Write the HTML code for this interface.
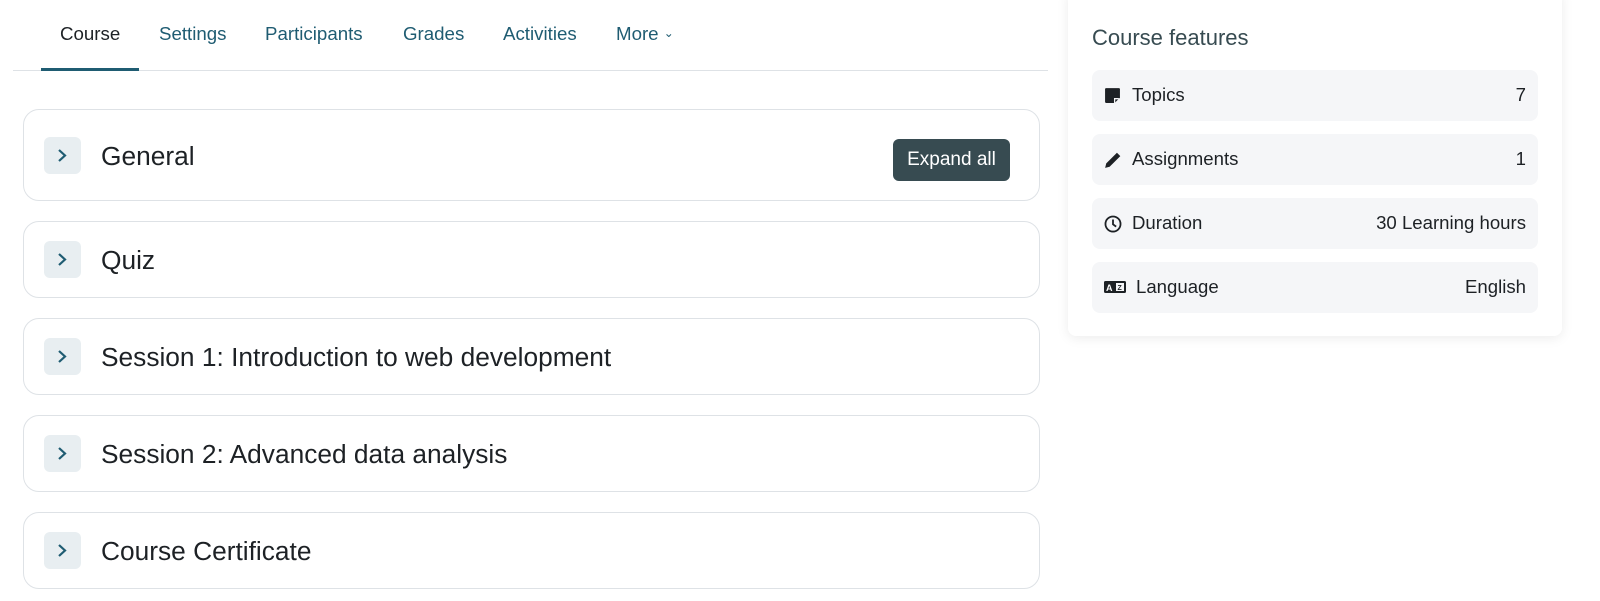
<!DOCTYPE html>
<html><head><meta charset="utf-8"><style>
*{box-sizing:border-box;margin:0;padding:0}
body{width:1600px;height:601px;background:#fff;font-family:"Liberation Sans",sans-serif;color:#1d2125;position:relative;overflow:hidden}
.tab{position:absolute;top:23px;font-size:18.7px;color:#1f5c72}
.nav-line{position:absolute;left:13px;top:70px;width:1035px;height:1px;background:#dee2e6}
.nav-active{position:absolute;left:41px;top:68px;width:98px;height:3px;background:#1f5c72}
.sec{position:absolute;left:23px;width:1017px;border:1px solid #dee2e6;border-radius:16px;background:#fff}
.tg{position:absolute;left:20px;width:37px;height:37px;border-radius:6px;background:#e8eef1}
.tg svg{position:absolute;left:12px;top:11px}
.st{position:absolute;left:77px;font-size:26.3px;color:#1d2125}
.btn{position:absolute;left:893px;top:139px;width:117px;height:42px;background:#374b51;color:#fff;border-radius:6px;font-size:19px;text-align:center;line-height:42px}
.card{position:absolute;left:1068px;top:-10px;width:494px;height:346px;background:#fff;border-radius:8px;box-shadow:0 2px 12px rgba(0,0,0,.08)}
.ct{position:absolute;left:1092px;top:25px;font-size:22px;color:#374b51}
.row{position:absolute;left:1092px;width:446px;height:51px;background:#f5f6f8;border-radius:8px;font-size:18.6px}
.row .l{position:absolute;left:40px;top:14px}
.row .r{position:absolute;right:12px;top:14px}
.row svg{position:absolute;left:12px;top:17px}
</style></head><body>
<div class="tab" style="left:60px;color:#1d2125">Course</div>
<div class="tab" style="left:159px">Settings</div>
<div class="tab" style="left:265px">Participants</div>
<div class="tab" style="left:403px">Grades</div>
<div class="tab" style="left:503px">Activities</div>
<div class="tab" style="left:616px">More <span style="font-size:12px;position:relative;top:-3px">&#8964;</span></div>
<div class="nav-line"></div><div class="nav-active"></div>

<div class="sec" style="top:109px;height:92px"><div class="tg" style="top:27px"><svg width="12" height="15" viewBox="0 0 12 15"><path d="M3 2l6 5.5L3 13" fill="none" stroke="#1f5c72" stroke-width="2.2"/></svg></div><div class="st" style="top:31px">General</div></div>
<div class="btn">Expand all</div>
<div class="sec" style="top:221px;height:77px"><div class="tg" style="top:19px"><svg width="12" height="15" viewBox="0 0 12 15"><path d="M3 2l6 5.5L3 13" fill="none" stroke="#1f5c72" stroke-width="2.2"/></svg></div><div class="st" style="top:23px">Quiz</div></div>
<div class="sec" style="top:318px;height:77px"><div class="tg" style="top:19px"><svg width="12" height="15" viewBox="0 0 12 15"><path d="M3 2l6 5.5L3 13" fill="none" stroke="#1f5c72" stroke-width="2.2"/></svg></div><div class="st" style="top:23px">Session 1: Introduction to web development</div></div>
<div class="sec" style="top:415px;height:77px"><div class="tg" style="top:19px"><svg width="12" height="15" viewBox="0 0 12 15"><path d="M3 2l6 5.5L3 13" fill="none" stroke="#1f5c72" stroke-width="2.2"/></svg></div><div class="st" style="top:23px">Session 2: Advanced data analysis</div></div>
<div class="sec" style="top:512px;height:77px"><div class="tg" style="top:19px"><svg width="12" height="15" viewBox="0 0 12 15"><path d="M3 2l6 5.5L3 13" fill="none" stroke="#1f5c72" stroke-width="2.2"/></svg></div><div class="st" style="top:23px">Course Certificate</div></div>

<div class="card"></div>
<div class="ct">Course features</div>
<div class="row" style="top:70px"><svg width="17" height="17" viewBox="0 0 16 16"><path d="M2 1h12a1 1 0 0 1 1 1v8l-5 5H2a1 1 0 0 1-1-1V2a1 1 0 0 1 1-1z" fill="#1d2125"/><path d="M10 15v-4h4" fill="none" stroke="#f5f6f8" stroke-width="1.2"/></svg><span class="l">Topics</span><span class="r">7</span></div>
<div class="row" style="top:134px"><svg width="18" height="18" viewBox="0 0 16 16"><path d="M11.5 1.5l3 3L5 14l-4 1 1-4z" fill="#1d2125"/></svg><span class="l">Assignments</span><span class="r">1</span></div>
<div class="row" style="top:198px"><svg width="18" height="18" viewBox="0 0 16 16"><circle cx="8" cy="8" r="6.7" fill="none" stroke="#1d2125" stroke-width="1.6"/><path d="M8 4v4.3l2.8 2" fill="none" stroke="#1d2125" stroke-width="1.6"/></svg><span class="l">Duration</span><span class="r">30 Learning hours</span></div>
<div class="row" style="top:262px"><svg width="22" height="14" viewBox="0 0 22 14" style="top:18px"><rect x="0" y="1" width="22" height="12" rx="1.5" fill="#1d2125"/><rect x="12" y="3" width="8" height="8" fill="#f5f6f8"/><text x="2" y="11" font-size="9" font-weight="bold" fill="#fff" font-family="Liberation Sans">A</text><text x="13.5" y="10" font-size="7" font-weight="bold" fill="#1d2125" font-family="Liberation Sans">Z</text></svg><span class="l" style="left:44px">Language</span><span class="r">English</span></div>
</body></html>
